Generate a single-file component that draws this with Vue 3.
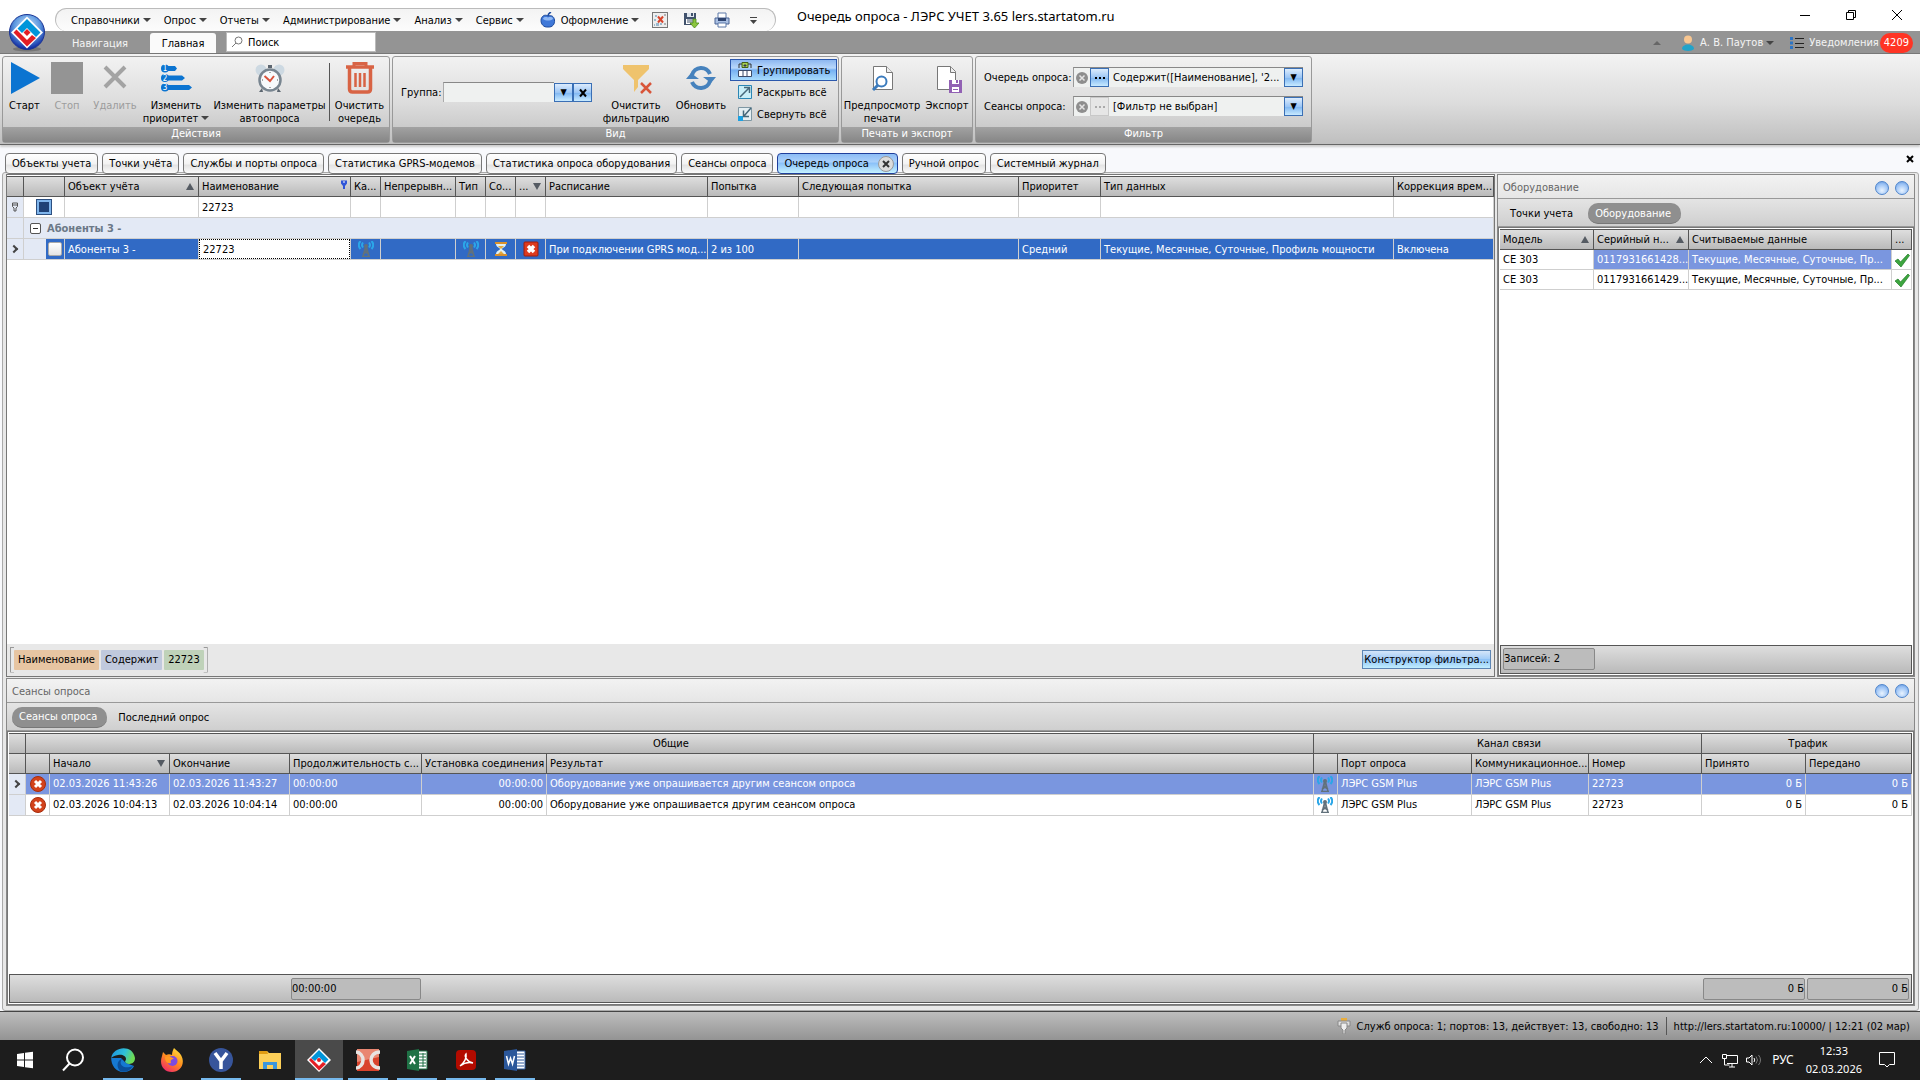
<template>
  <div class="window">
    <header class="titlebar">
      <nav class="quick-menu">
        <button v-for="item in menus" :key="item" class="menu-btn">
          <svg v-if="item === 'Оформление'" class="apple" viewBox="0 0 16 16">
            <path d="M8 4C5 2 1 4 1 8.500C1 12 3.500 15.500 8 15C12.500 15.500 15 12 14.500 8C14 4 11 3 8 4Z" fill="#3f78d8" stroke="#1d4a9c" />
            <path d="M3 7C3 5 6 4.500 8 5.500C10 4.500 13 5 13 7C10 9 6 9 3 7Z" fill="#8fb8f4" />
            <path d="M8 4C8 2 9 1 11 0" fill="none" stroke="#1d4a9c" stroke-width="1.500" />
          </svg>
          {{ item }}<i class="caret"></i>
        </button>
        <button class="tool-btn" aria-label="Закрыть все">
          <svg viewBox="0 0 16 16">
            <rect x=".5" y=".5" width="15" height="15" fill="#eee" stroke="#777" />
            <path d="M3 3h2v2H3zM2 7h2v2H2zM4 11h3v3H4zM8 11h2v2H8zM2 12h1v2H2z" fill="#9bb8cc" />
            <path d="M6 4.500l5 6M11 4.500l-5 6" stroke="#d8452c" stroke-width="2" />
            <path d="M12 3h2M12 12h2" stroke="#777" />
          </svg>
        </button>
        <button class="tool-btn" aria-label="Сохранить">
          <svg viewBox="0 0 16 16">
            <path d="M1 1h12v12H1z" fill="#41526d" />
            <path d="M4 1h7v4H4z" fill="#dfe6ee" /><path d="M8 1h2v3H8z" fill="#41526d" />
            <path d="M3 7h8v5H3z" fill="#fff" /><path d="M4 8h6M4 10h6" stroke="#41526d" />
            <path d="M10 7h3v4h3l-4.500 5L7 11h3z" fill="#8cc63f" stroke="#4c8a1a" stroke-width=".8" />
          </svg>
        </button>
        <button class="tool-btn" aria-label="Печать">
          <svg viewBox="0 0 16 16">
            <path d="M4 1h8v6H4z" fill="#fff" stroke="#5d78a8" />
            <path d="M1 6h14v6H1z" fill="#a9bfe2" stroke="#4a6496" />
            <path d="M4 6h8v3H4z" fill="#2e4470" />
            <path d="M4 11h8v4H4z" fill="#fff" stroke="#5d78a8" />
          </svg>
        </button>
        <button class="tool-btn" aria-label="Настройка панели">
          <svg viewBox="0 0 16 16"><path d="M5 5.500h7" stroke="#444" /><path d="M5 8h7l-3.500 4z" fill="#444" /></svg>
        </button>
      </nav>
      <h1 class="title">Очередь опроса - ЛЭРС УЧЕТ 3.65 lers.startatom.ru</h1>
      <div class="window-buttons">
        <button aria-label="Свернуть"><svg viewBox="0 0 12 12"><path d="M1 6.500h10" /></svg></button>
        <button aria-label="Восстановить"><svg viewBox="0 0 12 12"><path d="M1.500 3.500h7v7h-7zM3.500 3V1.500h7v7H9" /></svg></button>
        <button aria-label="Закрыть"><svg viewBox="0 0 12 12"><path d="M1 1l10 10M11 1L1 11" /></svg></button>
      </div>
    </header>

    <svg class="app-logo" viewBox="0 0 38 38">
      <defs>
        <radialGradient id="orb" cx="50%" cy="35%" r="62%">
          <stop offset="0" stop-color="#d3e8fb" /><stop offset=".6" stop-color="#5b97df" /><stop offset="1" stop-color="#1430a4" />
        </radialGradient>
      </defs>
      <ellipse cx="19" cy="35" rx="14" ry="2.500" fill="#555" opacity=".5" />
      <circle cx="19" cy="18" r="17.500" fill="url(#orb)" stroke="#1a3494" />
      <path d="M19 2.500L35 18.500L19 34.500L3 18.500Z" fill="#fff" />
      <path d="M19 5L32.500 18.500L28 23L19 14L14 19L9.500 14.500Z" fill="#0095da" />
      <path d="M5.500 18.500L8.500 15.500L19 26L24 21L28 24L19 32.500Z" fill="#e31e24" />
      <path d="M19 15l3.500 3.500L19 22l-3.500-3.500z" fill="#e31e24" />
    </svg>

    <div class="ribbon-tabs">
      <button class="ribbon-tab">Навигация</button>
      <button class="ribbon-tab active">Главная</button>
      <label class="search">
        <svg viewBox="0 0 12 12"><circle cx="7.500" cy="4.500" r="3.500" /><path d="M5 7L1 11" /></svg>
        <input type="text" value="Поиск" aria-label="Поиск">
      </label>
      <div class="account">
        <button aria-label="Свернуть ленту"><i class="caret up"></i></button>
        <button class="user">
          <svg viewBox="0 0 14 16"><circle cx="7" cy="4.500" r="4" fill="#f8c690" /><path d="M1 14C1 8 13 8 13 14C11 16.500 3 16.500 1 14Z" fill="#22a3c9" /></svg>
          А. В. Паутов<i class="caret"></i>
        </button>
        <button class="notes">
          <svg viewBox="0 0 14 12"><path d="M0 1.500h3M0 6h3M0 10.500h3" stroke="#2d74c4" stroke-width="3" /><path d="M5 1.500h9M5 6.500h9M5 10.500h9" stroke="#222" /></svg>
          Уведомления<b>4209</b>
        </button>
      </div>
    </div>

    <div class="ribbon">
      <section class="group">
        <div class="group-body">
          <button class="big w-start">
            <svg viewBox="0 0 32 32"><path d="M2 0L31 16L2 32Z" fill="#0b74d1" /></svg>Старт
          </button>
          <button class="big w-stop" disabled>
            <svg viewBox="0 0 32 32"><path d="M0 0h32v32H0z" fill="#949494" /></svg>Стоп
          </button>
          <button class="big w-del" disabled>
            <svg viewBox="0 0 32 32"><path d="M6 5L26 25M26 5L6 25" stroke="#a3a3a3" stroke-width="4" /></svg>Удалить
          </button>
          <button class="big w-prio">
            <svg viewBox="0 0 32 32">
              <path d="M5 4h10l2 2.500L15 9H5zM5 13.500h17l3 2.500-3 2.500H5zM5 23h24l3 2.500L29 28H5z" fill="#0b74d1" />
              <circle cx="5" cy="6.500" r="4" fill="#0b74d1" /><circle cx="5" cy="16" r="4" fill="#0b74d1" /><circle cx="5" cy="25.500" r="4" fill="#0b74d1" />
              <g fill="#fff" font-size="8" text-anchor="middle"><text x="5" y="9">1</text><text x="5" y="19">2</text><text x="5" y="28">3</text></g>
            </svg>
            <span>Изменить<br>приоритет<i class="caret"></i></span>
          </button>
          <button class="big w-params">
            <svg viewBox="0 0 32 32">
              <circle cx="7" cy="8" r="5.500" fill="#cdd9e2" /><circle cx="25" cy="8" r="5.500" fill="#cdd9e2" />
              <path d="M8 26l-3 4h4zM24 26l3 4h-4z" fill="#5c6670" /><path d="M14 3h4v3h-4z" fill="#5c6670" />
              <circle cx="16" cy="18" r="10.500" fill="#f7fafc" stroke="#788590" stroke-width="2.500" />
              <path d="M10.500 14L16 19l4-5" fill="none" stroke="#d9533c" stroke-width="2" />
              <path d="M16 10v1M16 25v1M8 18h1M23 18h1" stroke="#555" />
            </svg>
            <span>Изменить параметры<br>автоопроса</span>
          </button>
          <i class="separator"></i>
          <button class="big w-clear">
            <svg viewBox="0 0 32 32" fill="none" stroke="#d86344">
              <path d="M2 5h28" stroke-width="3.500" /><path d="M10 4V1.500h12V4" stroke-width="3" />
              <path d="M5.500 6v21q0 3 3 3h15q3 0 3-3V6" stroke-width="3.500" /><path d="M11.500 11v14M16 11v14M20.500 11v14" stroke-width="2.500" />
            </svg>
            <span>Очистить<br>очередь</span>
          </button>
        </div>
        <h2>Действия</h2>
      </section>

      <section class="group">
        <div class="group-body">
          <div class="group-field">
            <label for="group">Группа:</label>
            <input id="group" type="text">
            <button class="blue-btn" aria-label="Выбрать">▼</button>
            <button class="blue-btn" aria-label="Очистить">
              <svg viewBox="0 0 10 10"><path d="M2 1.500l6 7M8 1.500l-6 7" stroke="#000" stroke-width="2" /></svg>
            </button>
          </div>
          <button class="big w-filter">
            <svg viewBox="0 0 32 32">
              <path d="M3 3h26v4L18 18v7l-4 5V18L3 7z" fill="#efc36d" />
              <path d="M21 21l10 10M31 21L21 31" stroke="#d8553a" stroke-width="2.500" />
            </svg>
            <span>Очистить<br>фильтрацию</span>
          </button>
          <button class="big w-refresh">
            <svg viewBox="0 0 32 32">
              <path d="M7 13A9.500 9.500 0 0 1 25 12M25 19A9.500 9.500 0 0 1 7 20" fill="none" stroke="#4682bd" stroke-width="4" />
              <path d="M18 15h13l-5 6zM1 17h13L6 11z" fill="#4682bd" />
            </svg>
            Обновить
          </button>
          <div class="stack">
            <button class="small pressed">
              <svg viewBox="0 0 14 16"><path d="M1 4V2h3M10 2h3v2M1 4v2M13 4v2" stroke="#333" fill="none" /><path d="M4 .5h6v5H4z" fill="#a6cf52" stroke="#446017" /><path d="M7 2v3M5.500 3.500h3" stroke="#335" /><path d="M.5 8.500h13v6H.5zM5 8.500v6M9 8.500v6" fill="#fff" stroke="#3b4b68" /></svg>
              Группировать
            </button>
            <button class="small">
              <svg viewBox="0 0 14 16"><path d="M.5 1.500h13v13H.5z" fill="#c9eef8" stroke="#2b86b4" /><path d="M2 13L11 4M6 3.500h5.500V9" fill="none" stroke="#466779" stroke-width="1.500" /></svg>
              Раскрыть всё
            </button>
            <button class="small">
              <svg viewBox="0 0 14 16"><path d="M.5 1.500h13v13H.5z" fill="#e4eef2" stroke="#7f97a3" /><path d="M0 10h5v5H0z" fill="#1ba1e2" /><path d="M13 2L6 10M5.500 4.500V10.500H11" fill="none" stroke="#466779" stroke-width="1.500" /></svg>
              Свернуть всё
            </button>
          </div>
        </div>
        <h2>Вид</h2>
      </section>

      <section class="group">
        <div class="group-body">
          <button class="big w-preview">
            <svg viewBox="0 0 32 32">
              <path d="M7.500 4.500h13l6 6v17h-19z" fill="#fff" stroke="#777" /><path d="M20.500 4.500v6h6" fill="#eee" stroke="#777" />
              <circle cx="15.500" cy="19.500" r="5" fill="#fff" stroke="#3b7bbd" stroke-width="2" /><path d="M12 23l-5 5" stroke="#3b7bbd" stroke-width="3" />
            </svg>
            <span>Предпросмотр<br>печати</span>
          </button>
          <button class="big w-export">
            <svg viewBox="0 0 32 32">
              <path d="M6.500 4.500h13l5 5v18h-18z" fill="#fff" stroke="#777" /><path d="M19.500 4.500v6h5" fill="#eee" stroke="#777" />
              <path d="M18 18h13v13H18z" fill="#9261b4" /><path d="M21 18h7v4h-7zM21 25h7v5h-7z" fill="#fff" /><path d="M25 18h2v3h-2zM22 27h5v1h-5z" fill="#9261b4" />
            </svg>
            Экспорт
          </button>
        </div>
        <h2>Печать и экспорт</h2>
      </section>

      <section class="group">
        <div class="filters">
          <div v-for="f in filters" :key="f.id" class="filter-row">
            <label :for="f.id">{{ f.label }}</label>
            <div class="combo">
              <button class="round-x" aria-label="Сбросить">
                <svg viewBox="0 0 12 12"><circle cx="6" cy="6" r="6" fill="#8e8e8e" /><path d="M3.500 3.500l5 5M8.500 3.500l-5 5" stroke="#e4e4e4" stroke-width="1.500" /></svg>
              </button>
              <button class="blue-btn" :disabled="!f.active" aria-label="Изменить">
                <svg viewBox="0 0 10 10"><path d="M0 4h2v2H0zM4 4h2v2H4zM8 4h2v2H8z" fill="currentColor" /></svg>
              </button>
              <select :id="f.id"><option>{{ f.value }}</option></select>
              <span class="drop blue-btn">▼</span>
            </div>
          </div>
        </div>
        <h2>Фильтр</h2>
      </section>
    </div>

    <nav class="doc-tabs">
      <button v-for="t in docTabs" :key="t" :class="['doc-tab', { active: t === currentTab }]" @click="currentTab = t">
        {{ t }}
        <svg v-if="t === currentTab" viewBox="0 0 16 16"><circle cx="8" cy="8" r="7.500" fill="#dcdcdc" stroke="#999" /><path d="M5 5l6 6M11 5l-6 6" stroke="#333" stroke-width="2" /></svg>
      </button>
      <button class="close-doc" aria-label="Закрыть вкладку"><svg viewBox="0 0 8 8"><path d="M1 1l6 6M7 1L1 7" stroke="#000" stroke-width="2" /></svg></button>
    </nav>

    <main class="workspace">
      <div class="upper">
        <section class="queue">
          <table class="grid queue-grid">
            <colgroup>
              <col class="c17"><col class="c22"><col class="c19"><col class="c134"><col class="c152"><col class="c30"><col class="c75"><col class="c30"><col class="c30"><col class="c30">
              <col class="c162"><col class="c91"><col class="c220"><col class="c82"><col><col class="c100">
            </colgroup>
            <thead>
              <tr>
                <th></th><th colspan="2"></th>
                <th v-for="c in queueCols" :key="c.name"><div class="th">{{ c.name }}<i v-if="c.sort" :class="['sort', c.sort]"></i>
                  <svg v-if="c.pin" class="pin" viewBox="0 0 8 10"><path d="M1 .5h6v3L5 6v3H3V6L1 3.500z" fill="#2f55d8" /><path d="M3 2h2" stroke="#fff" /></svg>
                </div></th>
              </tr>
            </thead>
            <tbody>
              <tr class="filter-line">
                <td class="mark"><svg class="i8" viewBox="0 0 8 10"><path d="M1.500 1h5v3.500L5 6v3H3V6L1.500 4.500zM1.500 3h5" fill="none" stroke="#555" /></svg></td>
                <td colspan="2" class="center"><button class="tri-check" aria-label="Выбрать все"></button></td>
                <td></td>
                <td class="edit"><input type="text" value="22723" aria-label="Фильтр по наименованию"></td>
                <td v-for="n in 11" :key="n"></td>
              </tr>
              <tr class="group-line">
                <td class="mark"></td>
                <td colspan="15"><button class="minus" aria-label="Свернуть группу"></button>Абоненты 3 -</td>
              </tr>
              <tr class="focused">
                <td class="mark"><i class="arrow"></i></td>
                <td class="indent"></td>
                <td class="center"><input type="checkbox" class="check" aria-label="Выбрать строку"></td>
                <td>Абоненты 3 -</td>
                <td class="edit cell-focus"><input type="text" value="22723" aria-label="Наименование"></td>
                <td class="center"><svg class="i16" viewBox="0 0 16 16"><use href="#antenna" /></svg></td>
                <td></td>
                <td class="center"><svg class="i16" viewBox="0 0 16 16"><use href="#antenna" /></svg></td>
                <td class="center">
                  <svg class="i16" viewBox="0 0 16 16"><path d="M2 1h12v2H2zM2 13h12v2H2z" fill="#d9902c" /><path d="M3 3h10c0 3-4 4-4 5s4 2 4 5H3c0-3 4-4 4-5S3 6 3 3z" fill="#dff0f6" /><path d="M5 5h6L8 8zM5 13l3-3 3 3z" fill="#e2a83f" /></svg>
                </td>
                <td class="center">
                  <svg class="i16" viewBox="0 0 16 16"><rect x="1" y="1" width="14" height="14" rx="1" fill="#dd3a1e" stroke="#a01c0c" /><path d="M5 5l6 6M11 5l-6 6" stroke="#fff" stroke-width="3.500" /></svg>
                </td>
                <td>При подключении GPRS мод...</td><td>2 из 100</td><td></td><td>Средний</td>
                <td>Текущие, Месячные, Суточные, Профиль мощности</td><td>Включена</td>
              </tr>
            </tbody>
          </table>
          <div class="filter-panel">
            <div class="criteria"><span class="field">Наименование</span><span class="op">Содержит</span><span class="val">22723</span></div>
            <button class="designer">Конструктор фильтра...</button>
          </div>
        </section>

        <section class="panel equipment">
          <div class="panel-head"><h3>Оборудование</h3><button class="orb" aria-label="Закрепить"></button><button class="orb" aria-label="Закрыть"></button></div>
          <div class="panel-tabs"><button>Точки учета</button><button class="active">Оборудование</button></div>
          <div class="panel-grid">
            <table class="grid">
              <colgroup><col class="c94"><col class="c95"><col><col class="c20"></colgroup>
              <thead>
                <tr>
                  <th><div class="th">Модель<i class="sort asc"></i></div></th>
                  <th><div class="th">Серийный н...<i class="sort asc"></i></div></th>
                  <th>Считываемые данные</th><th>...</th>
                </tr>
              </thead>
              <tbody>
                <tr v-for="(e, i) in equipment" :key="e" :class="{ picked: i === 0 }">
                  <td class="plain">CE 303</td><td>{{ e }}</td><td>Текущие, Месячные, Суточные, Пр...</td>
                  <td class="plain center"><svg class="i16" viewBox="0 0 16 16"><path d="M1 9l3-2 2.500 3L14 2l1.500 1.500L7 15z" fill="#3da63f" stroke="#237b2a" stroke-width=".7" /></svg></td>
                </tr>
              </tbody>
            </table>
            <div class="summary"><span class="sum-count">Записей: 2</span></div>
          </div>
        </section>
      </div>

      <section class="panel sessions">
        <div class="panel-head"><h3>Сеансы опроса</h3><button class="orb" aria-label="Закрепить"></button><button class="orb" aria-label="Закрыть"></button></div>
        <div class="panel-tabs"><button class="active">Сеансы опроса</button><button>Последний опрос</button></div>
        <div class="panel-grid">
          <table class="grid">
            <colgroup>
              <col class="c17"><col class="c24"><col class="c120"><col class="c120"><col class="c132"><col class="c125"><col>
              <col class="c24"><col class="c134"><col class="c117"><col class="c113"><col class="c104"><col class="c106">
            </colgroup>
            <thead>
              <tr class="bands"><th></th><th colspan="6">Общие</th><th colspan="4">Канал связи</th><th colspan="2">Трафик</th></tr>
              <tr>
                <th></th><th></th><th><div class="th">Начало<i class="sort desc"></i></div></th>
                <th>Окончание</th><th>Продолжительность с...</th><th>Установка соединения</th><th>Результат</th>
                <th></th><th>Порт опроса</th><th>Коммуникационное...</th><th>Номер</th><th>Принято</th><th>Передано</th>
              </tr>
            </thead>
            <tbody>
              <tr v-for="(s, i) in sessions" :key="s.from" :class="{ picked: i === 0 }">
                <td class="mark"><i v-if="i === 0" class="arrow"></i></td>
                <td class="center"><svg class="i16" viewBox="0 0 16 16"><circle cx="8" cy="8" r="7.500" fill="#d2421b" stroke="#a62c0c" /><path d="M5 5l6 6M11 5l-6 6" stroke="#fff" stroke-width="3" /></svg></td>
                <td>{{ s.from }}</td><td>{{ s.to }}</td><td>00:00:00</td><td class="right">00:00:00</td>
                <td>Оборудование уже опрашивается другим сеансом опроса</td>
                <td class="center"><svg class="i16" viewBox="0 0 16 16"><use href="#antenna" /></svg></td>
                <td>ЛЭРС GSM Plus</td><td>ЛЭРС GSM Plus</td><td>22723</td><td class="right">0 Б</td><td class="right">0 Б</td>
              </tr>
            </tbody>
          </table>
          <div class="summary totals"><span class="sum-time">00:00:00</span><span class="sum-in">0 Б</span><span class="sum-out">0 Б</span></div>
        </div>
      </section>
    </main>

    <footer class="statusbar">
      <svg class="i16" viewBox="0 0 16 16"><path d="M5 0h6v3H5z" fill="#e9ad3c" /><path d="M2 3h12v5H2z" fill="#ddd" stroke="#888" /><path d="M5 5h6v5l-2 2v4H7v-4l-2-2z" fill="#eee" stroke="#888" /></svg>
      <span>Служб опроса: 1; портов: 13, действует: 13, свободно: 13</span>
      <i></i>
      <span>http://lers.startatom.ru:10000/ | 12:21 (02 мар)</span>
    </footer>

    <footer class="taskbar">
      <button v-for="a in apps" :key="a.id" :class="['task', { running: a.running, current: a.id === 'lers' }]" :aria-label="a.id">
        <svg v-if="a.id === 'start'" viewBox="0 0 24 24"><path d="M4 6l7-1v6.500H4zM12 4.800l8-1V11.500h-8zM4 12.500h7V19l-7-1zM12 12.500h8v7.700l-8-1z" fill="#fff" /></svg>
        <svg v-else-if="a.id === 'search'" viewBox="0 0 24 24"><circle cx="13" cy="9.500" r="8" fill="none" stroke="#fff" stroke-width="2" /><path d="M7.500 15.500L1 22.500" stroke="#fff" stroke-width="2" /></svg>
        <svg v-else-if="a.id === 'edge'" viewBox="0 0 24 24">
          <defs><linearGradient id="edge" x2="1" y2=".3"><stop offset="0" stop-color="#1b8fe0" /><stop offset=".6" stop-color="#2fc1d8" /><stop offset="1" stop-color="#6ddc55" /></linearGradient></defs>
          <path d="M.2 10C0 17 5 24 12 24c5 0 9-2 11-6l-8-3-5-5z" fill="#1679d2" />
          <path d="M.2 10C2-2 22-4 24 10c0 6-6 7-9 5-2-2 0-2 0-4 0-3-4-5-8-4C4 7.500 1 9 .2 10z" fill="url(#edge)" />
          <path d="M11 11c-4 5 1 11 11 7-3 5-8 7-13 5-4-4-3-11 2-12z" fill="#0b4f9a" />
        </svg>
        <svg v-else-if="a.id === 'firefox'" viewBox="0 0 24 24">
          <defs><linearGradient id="fox" x1=".8" x2=".2" y2="1"><stop offset="0" stop-color="#ffe03a" /><stop offset=".5" stop-color="#ff8a1e" /><stop offset="1" stop-color="#f0246e" /></linearGradient></defs>
          <path d="M14 0c3 3 5 4 7 7 5 9-1 17-9 17C3 24-1 16 2 8l1-4 3 3c2-1 4-1 6 0 0-3 1-5 2-7z" fill="url(#fox)" /><circle cx="12.500" cy="13" r="5" fill="#7b4be0" /><path d="M5 9c4-1 7 0 9 2-3 0-4 2-3 4-4 1-6-2-6-6z" fill="#ff9a22" />
        </svg>
        <svg v-else-if="a.id === 'yandex'" viewBox="0 0 24 24"><circle cx="12" cy="12" r="12" fill="#37559b" /><path d="M6 5l6 8 6-8M12 12v9" fill="none" stroke="#fff" stroke-width="3.500" /></svg>
        <svg v-else-if="a.id === 'explorer'" viewBox="0 0 24 24"><path d="M1 3h8l2 2h12v16H1z" fill="#fccf58" /><path d="M1 3h8l1 3H1z" fill="#e09c13" /><path d="M5 21v-7h14v7h-4v-4H9v4z" fill="#3c96dc" /></svg>
        <svg v-else-if="a.id === 'lers'" viewBox="0 0 24 24"><path d="M12 0l12 12-12 12L0 12z" fill="#fff" /><path d="M12 2l9.500 9.500-3.500 3.500-6-6-4 4-4-3z" fill="#0095da" /><path d="M2 12l2-2 8 8 4-4 3 2-7 6.500z" fill="#e31e24" /><circle cx="12" cy="12" r="2" fill="#e31e24" /></svg>
        <svg v-else-if="a.id === 'dc'" viewBox="0 0 24 24"><path d="M1 1h22v22H1z" fill="#d9432c" /><path d="M1 1h22v8L1 14z" fill="#e98772" /><path d="M0 4c4 0 7 4 7 8s-3 8-7 8M24 4c-6 0-9 4-9 8s3 8 9 8" fill="none" stroke="#e8e4e2" stroke-width="3.500" /></svg>
        <svg v-else-if="a.id === 'excel'" viewBox="0 0 24 24"><path d="M12 3h10v18H12z" fill="#fff" stroke="#1f7246" /><path d="M14 6h7M14 9h7M14 12h7M14 15h7M14 18h7M18 5v14" stroke="#1f7246" /><path d="M2 3l12-2v22L2 21z" fill="#1f7246" /><path d="M5 8l5 8M10 8l-5 8" stroke="#fff" stroke-width="2" /></svg>
        <svg v-else-if="a.id === 'acrobat'" viewBox="0 0 24 24"><rect x="2" y="2" width="20" height="20" rx="4" fill="#b30b00" /><path d="M6 18c4-3 7-8 6-12-2 2 1 8 7 9-4-1-9 0-13 3z" fill="none" stroke="#fff" stroke-width="1.500" /></svg>
        <svg v-else viewBox="0 0 24 24"><path d="M12 3h10v18H12z" fill="#fff" stroke="#2b579a" /><path d="M14 6h7M14 9h7M14 12h7M14 15h7M14 18h7" stroke="#2b579a" /><path d="M1 3l13-2v22L1 21z" fill="#2b579a" /><path d="M3.500 8l2 8 2-6 2 6 2-8" fill="none" stroke="#fff" stroke-width="1.500" /></svg>
      </button>
      <div class="tray">
        <svg viewBox="0 0 16 16"><path d="M2 11l6-6 6 6" /></svg>
        <svg viewBox="0 0 16 16"><path d="M5 3.500h10.500v8H5M10 12v3M7 15h6M.5 2.500h4v4h-4zM2.500 7v6h5" /></svg>
        <svg viewBox="0 0 16 16"><path d="M.5 6v4H3l3 3V3L3 6zM8 6q1.500 2 0 4" /><path d="M10 4.500q3 3.500 0 7M12.500 3q4 5 0 10" stroke="#777" /></svg>
        <span class="lang">РУС</span>
        <time>12:33<br>02.03.2026</time>
        <svg class="action" viewBox="0 0 18 18"><path d="M1.500 1.500h15v12h-5L9 16l-2.500-2.500h-5z" /></svg>
      </div>
    </footer>

    <svg class="defs" aria-hidden="true">
      <symbol id="antenna" viewBox="0 0 16 16">
        <path d="M2.500 0q-3.500 4 0 8M13.500 0q3.500 4 0 8M5 1.500q-2 2.500 0 5M11 1.500q2 2.500 0 5" fill="none" stroke="#2ba6e8" stroke-width="2" />
        <path d="M8 4L5 15.500M8 4l3 11.500M6.500 9h3M5 13l5-3M6 10l5 3M4 15.500h8" fill="none" stroke="#62717b" stroke-width="1.500" />
        <circle cx="8" cy="5" r="2" fill="#62717b" />
      </symbol>
    </svg>
  </div>
</template>

<script setup>
import { ref } from 'vue'

const menus = ['Справочники', 'Опрос', 'Отчеты', 'Администрирование', 'Анализ', 'Сервис', 'Оформление']

const filters = [
  { id: 'queue-filter', label: 'Очередь опроса:', value: "Содержит([Наименование], '2...", active: true },
  { id: 'session-filter', label: 'Сеансы опроса:', value: '[Фильтр не выбран]', active: false }
]

const currentTab = ref('Очередь опроса')
const docTabs = [
  'Объекты учета',
  'Точки учёта',
  'Службы и порты опроса',
  'Статистика GPRS-модемов',
  'Статистика опроса оборудования',
  'Сеансы опроса',
  'Очередь опроса',
  'Ручной опрос',
  'Системный журнал'
]

const queueCols = [
  { name: 'Объект учёта', sort: 'asc' },
  { name: 'Наименование', pin: true },
  { name: 'Ка...' },
  { name: 'Непрерывн...' },
  { name: 'Тип' },
  { name: 'Со...' },
  { name: '...', sort: 'desc' },
  { name: 'Расписание' },
  { name: 'Попытка' },
  { name: 'Следующая попытка' },
  { name: 'Приоритет' },
  { name: 'Тип данных' },
  { name: 'Коррекция врем...' }
]

const equipment = ['0117931661428...', '0117931661429...']

const sessions = [
  { from: '02.03.2026 11:43:26', to: '02.03.2026 11:43:27' },
  { from: '02.03.2026 10:04:13', to: '02.03.2026 10:04:14' }
]

const apps = [
  { id: 'start' },
  { id: 'search' },
  { id: 'edge', running: true },
  { id: 'firefox' },
  { id: 'yandex', running: true },
  { id: 'explorer' },
  { id: 'lers', running: true },
  { id: 'dc', running: true },
  { id: 'excel', running: true },
  { id: 'acrobat', running: true },
  { id: 'word', running: true }
]
</script>

<style>
body {
  margin: 0;
}
</style>

<style scoped>
.window {
  position: relative;
  display: flex;
  flex-direction: column;
  min-height: 100vh;
  background: #f8f9fc;
  font: 11px/13px Tahoma, "DejaVu Sans Condensed", "Noto Sans", sans-serif;
  color: #000;
}

.window *,
.window *::before {
  box-sizing: border-box;
}

button,
input,
select {
  margin: 0;
  padding: 0;
  border: none;
  border-radius: 0;
  background: none;
  font: inherit;
  color: inherit;
}

h1,
h2,
h3 {
  margin: 0;
  font: inherit;
}

svg {
  flex: none;
}

.defs {
  position: absolute;
  width: 0;
  height: 0;
}

.caret {
  display: inline-block;
  margin-left: 3px;
  vertical-align: 2px;
  border: 4px solid transparent;
  border-top-color: #444;
  border-bottom: none;
}

.caret.up {
  border-top: none;
  border-bottom: 4px solid #666;
}

/* title bar */
.titlebar {
  display: flex;
  align-items: flex-start;
  height: 31px;
  padding-left: 55px;
  background: #fff;
}

.quick-menu {
  display: flex;
  align-items: center;
  width: 721px;
  height: 23px;
  margin-top: 8px;
  padding-left: 15px;
  border: 1px solid #bbb;
  border-bottom: none;
  border-radius: 12px;
  background: linear-gradient(#f3f3f3, #fcfcfc);
}

.menu-btn {
  display: flex;
  align-items: center;
  margin-right: 13px;
  white-space: nowrap;
}

.menu-btn:last-of-type {
  margin-right: 16px;
}

.apple {
  width: 16px;
  height: 16px;
  margin: 0 5px 0 3px;
}

.tool-btn {
  display: flex;
  margin-right: 15px;
}

.tool-btn svg {
  width: 16px;
  height: 16px;
}

.title {
  margin: 6px 0 0 21px;
  font: 13px/20px "Noto Sans", sans-serif;
}

.window-buttons {
  display: flex;
  margin-left: auto;
}

.window-buttons button {
  display: flex;
  align-items: center;
  justify-content: center;
  width: 46px;
  height: 29px;
}

.window-buttons svg {
  width: 12px;
  height: 12px;
  fill: none;
  stroke: #000;
}

.app-logo {
  position: absolute;
  left: 8px;
  top: 14px;
  width: 38px;
  height: 38px;
}

/* ribbon */
.ribbon-tabs {
  display: flex;
  height: 23px;
  padding-left: 50px;
  border-bottom: 1px solid #777;
  background: #949494;
  color: #f4f4f4;
}

.ribbon-tab {
  width: 100px;
  padding-top: 2px;
}

.ribbon-tab.active {
  width: 66px;
  margin-top: 2px;
  padding-top: 0;
  border-radius: 3px 3px 0 0;
  background: #fafafa;
  color: #000;
}

.search {
  display: flex;
  align-items: center;
  width: 150px;
  height: 20px;
  margin: 1px 0 0 10px;
  padding-left: 4px;
  border: 1px solid #bbb;
  background: #fff;
  color: #000;
}

.search svg {
  width: 12px;
  height: 12px;
  margin-right: 5px;
  fill: none;
  stroke: #777;
}

.search input {
  width: 100px;
}

.account,
.account button {
  display: flex;
  align-items: center;
}

.account {
  gap: 20px;
  margin-left: auto;
  padding: 1px 7px 0 0;
}

.account svg {
  width: 14px;
  height: 16px;
  margin-right: 5px;
}

.account .notes {
  margin-left: -4px;
}

.account b {
  margin-left: 1px;
  padding: 3px 4px;
  border-radius: 10px;
  background: #ff3424;
  color: #fff;
  font-weight: normal;
  line-height: 14px;
}

.ribbon {
  display: flex;
  gap: 2px;
  height: 91px;
  padding: 2px 2px 0;
  border-bottom: 1px solid #666;
  background: linear-gradient(#f3f3f3, #dcdcdc 55%, #bfbfbf);
  box-shadow: 0 2px 2px #ccc;
}

.group {
  display: flex;
  flex-direction: column;
  height: 87px;
  border: 1px solid #999;
  border-radius: 3px;
}

.group h2 {
  height: 15px;
  background: linear-gradient(#a2a2a2, #868686);
  color: #fff;
  text-align: center;
}

.group-body {
  display: flex;
  flex: 1;
}

.big {
  display: flex;
  flex-direction: column;
  align-items: center;
  padding-top: 5px;
  white-space: nowrap;
}

.big svg {
  width: 32px;
  height: 32px;
  margin-bottom: 5px;
}

.big:disabled {
  color: #9c9c9c;
}

.w-start { width: 43px; }
.w-stop { width: 42px; }
.w-del { width: 54px; }
.w-prio { width: 68px; }
.w-params { width: 119px; }
.w-clear { width: 59px; }
.w-filter { width: 72px; }
.w-refresh { width: 58px; }
.w-preview { width: 80px; }
.w-export { width: 50px; }

.separator {
  width: 1px;
  height: 58px;
  margin-top: 6px;
  background: #555;
}

.group-field {
  display: flex;
  align-items: center;
  width: 207px;
  padding: 0 8px;
}

.group-field label {
  flex: 1;
}

.group-field input {
  width: 111px;
  height: 20px;
  border-top: 1px solid #888;
  border-left: 1px solid #aaa;
  background: #eff1f0;
}

.blue-btn {
  width: 19px;
  height: 19px;
  border: 1px solid #3a6fb5;
  background: linear-gradient(#dcecfd, #9cc6f5 50%, #7db5f1 51%, #c8eaff);
  font-size: 9px;
  line-height: 16px;
  text-align: center;
}

.blue-btn:disabled {
  border-color: #c8c8c8;
  background: #e6e6e6;
  color: #aaa;
}

.blue-btn svg {
  width: 10px;
  height: 10px;
  vertical-align: middle;
}

.stack {
  display: flex;
  flex-direction: column;
  width: 108px;
  padding: 2px 1px 2px 0;
}

.small {
  display: flex;
  align-items: center;
  gap: 5px;
  height: 22px;
  padding-left: 7px;
  border: 1px solid transparent;
  white-space: nowrap;
}

.small svg {
  width: 14px;
  height: 16px;
}

.small.pressed {
  border: 1px solid #2c58ac;
  background: linear-gradient(#8db7f0, #b9d8fb 40%, #76b0f2 50%, #a8dcfd);
}

.filters {
  display: flex;
  flex: 1;
  flex-direction: column;
  gap: 9px;
  width: 335px;
  padding: 10px 8px 0;
}

.filter-row {
  display: flex;
  align-items: center;
  justify-content: space-between;
}

.combo {
  position: relative;
  display: flex;
  align-items: center;
  width: 230px;
  height: 20px;
  border-top: 1px solid #888;
  border-left: 1px solid #999;
  background: #eff1f0;
}

.round-x {
  display: flex;
  margin: 0 2px;
}

.round-x svg {
  width: 12px;
  height: 12px;
}

.combo select {
  flex: 1;
  height: 19px;
  padding-left: 4px;
  appearance: none;
}

.drop {
  position: absolute;
  right: 0;
  top: 0;
  pointer-events: none;
}

/* document tabs */
.doc-tabs {
  position: relative;
  display: flex;
  gap: 4px;
  height: 29px;
  margin-bottom: -2px;
  padding: 8px 9px 0 5px;
}

.doc-tab {
  display: flex;
  align-items: center;
  gap: 9px;
  height: 21px;
  padding: 0 6px;
  border: 1px solid #777;
  border-radius: 4px;
  background: linear-gradient(#fff, #f3f3f3 50%, #e4e4e4 60%, #fafafa);
  white-space: nowrap;
}

.doc-tab.active {
  padding-right: 3px;
  border-color: #1f3f9c;
  background: linear-gradient(#8cbcf5, #a9d0fb 40%, #8cc2f9 50%, #c5f2ff);
}

.doc-tab svg {
  width: 16px;
  height: 16px;
}

.close-doc {
  display: flex;
  margin: 2px -3px 0 auto;
}

.close-doc svg {
  width: 8px;
  height: 8px;
}

/* workspace */
.workspace {
  display: flex;
  flex: 1;
  flex-direction: column;
  gap: 1px;
  margin: 0 1px 0 2px;
  padding: 1px 3px 4px;
  border: 1px solid #aaa;
  border-radius: 3px;
  background: #e8e8e8;
}

.upper {
  display: flex;
  flex: 502 1 0;
  gap: 2px;
}

.queue {
  display: flex;
  flex: 1;
  flex-direction: column;
  min-width: 0;
  padding-top: 1px;
  border: 1px solid #777;
  background: #fff;
}

.grid {
  width: 100%;
  table-layout: fixed;
  border-spacing: 0;
  border-top: 1px solid #555;
}

.c17 { width: 17px; }
.c19 { width: 19px; }
.c20 { width: 20px; }
.c22 { width: 22px; }
.c24 { width: 24px; }
.c30 { width: 30px; }
.c75 { width: 75px; }
.c82 { width: 82px; }
.c91 { width: 91px; }
.c94 { width: 94px; }
.c95 { width: 95px; }
.c100 { width: 100px; }
.c104 { width: 104px; }
.c106 { width: 106px; }
.c113 { width: 113px; }
.c117 { width: 117px; }
.c120 { width: 120px; }
.c125 { width: 125px; }
.c132 { width: 132px; }
.c134 { width: 134px; }
.c152 { width: 152px; }
.c162 { width: 162px; }
.c220 { width: 220px; }

.grid th {
  height: 20px;
  padding: 0 0 0 3px;
  border-right: 1px solid #555;
  border-bottom: 1px solid #555;
  background: linear-gradient(#dedede, #bababa);
  font-weight: normal;
  text-align: left;
  white-space: nowrap;
  overflow: hidden;
}

.grid td {
  height: 21px;
  padding: 0 3px;
  border-right: 1px solid #cfcfcf;
  border-bottom: 1px solid #cfcfcf;
  background: #fff;
  white-space: nowrap;
  overflow: hidden;
}

.equipment .grid td {
  height: 20px;
}

.th {
  display: flex;
  align-items: center;
  justify-content: space-between;
}

.sort {
  margin-right: 4px;
  border: 4px solid transparent;
}

.sort.asc {
  border-top: none;
  border-bottom: 7px solid #555b63;
}

.sort.desc {
  border-bottom: none;
  border-top: 7px solid #555b63;
}

.pin {
  width: 8px;
  height: 10px;
  margin: 0 2px 4px 0;
}

.i8 {
  display: block;
  width: 8px;
  height: 10px;
  margin-left: 1px;
}

.i16 {
  display: inline-block;
  width: 16px;
  height: 16px;
  vertical-align: middle;
}

.grid .center {
  padding: 0;
  line-height: 0;
  text-align: center;
}

.grid .right {
  text-align: right;
}

.grid .bands th {
  text-align: center;
}

.grid .mark,
.grid .indent,
.grid .group-line td {
  background: #e3e9f5;
}

.grid .indent {
  border-right: none;
}

.grid .group-line td {
  color: #6b7887;
  font-weight: bold;
}

.arrow {
  display: block;
  width: 6px;
  height: 6px;
  margin-left: 1px;
  border: solid #444;
  border-width: 2px 2px 0 0;
  transform: rotate(45deg);
}

.tri-check {
  width: 14px;
  height: 14px;
  border: 2px solid #7fb5ec;
  outline: 1px solid #2c4f80;
  background: #1f4176;
  vertical-align: middle;
}

.minus {
  width: 11px;
  height: 11px;
  margin: 0 6px 0 3px;
  border: 1px solid #555;
  border-radius: 2px;
  background: linear-gradient(#333, #333) center / 5px 1px no-repeat #fff;
  vertical-align: -1px;
}

.check {
  width: 14px;
  height: 14px;
  border: 1px solid #aaa;
  border-radius: 2px;
  background: linear-gradient(#fff, #e4e4e4);
  appearance: none;
  vertical-align: middle;
}

.edit input {
  display: block;
  width: 100%;
}

.grid .focused td:not(.mark):not(.indent):not(.cell-focus) {
  background: #316ac5;
  color: #fff;
}

.grid .cell-focus {
  padding: 0;
}

.cell-focus input {
  height: 20px;
  padding-left: 3px;
  border: 1px dotted #000;
}

.grid .picked td:not(.mark):not(.plain) {
  background: #7a96df;
  color: #fff;
}

.filter-panel {
  display: flex;
  align-items: center;
  justify-content: space-between;
  height: 32px;
  margin-top: auto;
  padding: 0 3px;
  background: #e8e8e8;
}

.criteria {
  position: relative;
  display: flex;
  gap: 2px;
  padding: 3px 4px;
}

.criteria::before {
  content: "";
  position: absolute;
  inset: 0;
  border: 1px solid #999;
  clip-path: polygon(0 0, 4px 0, 4px 100%, 0 100%, 0 0, 100% 0, 100% 100%, calc(100% - 4px) 100%, calc(100% - 4px) 0, 0 0);
}

.criteria span {
  padding: 4px;
  border-radius: 1px;
  line-height: 12px;
}

.field { background: #e7c5a2; }
.op { background: #c0c9dd; }
.val { background: #bfd2b9; }

.designer {
  height: 19px;
  padding: 0 1px;
  border: 1px solid #5d86b5;
  background: linear-gradient(#d4e5f9, #a4cdf7 45%, #8ec2f6 50%, #c1eeff);
}

/* side and bottom panels */
.panel {
  display: flex;
  flex-direction: column;
  border: 1px solid #888;
}

.equipment {
  width: 418px;
}

.sessions {
  flex: 326 1 0;
}

.panel-head,
.panel-tabs {
  display: flex;
  align-items: center;
  border-bottom: 1px solid #999;
}

.panel-head {
  gap: 6px;
  height: 24px;
  padding: 2px 5px 0;
  background: linear-gradient(#f2f2f2, #e6e6e6);
  color: #666;
}

.panel-head h3 {
  flex: 1;
}

.orb {
  width: 14px;
  height: 14px;
  border: 1px solid #4f85cc;
  border-radius: 50%;
  background: radial-gradient(circle at 50% 70%, #e8f3ff, #9cc3f5 60%, #5c93dc);
}

.panel-tabs {
  height: 28px;
  padding: 2px 0 0 5px;
  background: linear-gradient(#e4e4e4, #cfcfcf);
}

.panel-tabs button {
  height: 21px;
  margin-right: 4px;
  padding: 0 7px;
  border-radius: 10px;
}

.panel-tabs button:first-child:not(.active) {
  margin-right: 8px;
}

.panel-tabs .active {
  padding: 0 10px 0 7px;
  border-bottom: 1px solid #777;
  background: #8f8f8f;
  color: #fff;
}

.panel-grid {
  display: flex;
  flex: 1;
  flex-direction: column;
  padding: 1px;
  border: 1px solid #777;
  background: #fff;
}

.summary {
  display: flex;
  align-items: center;
  height: 29px;
  margin-top: auto;
  padding: 0 2px;
  border: 1px solid #555;
  background: linear-gradient(#dedede, #bababa);
}

.summary span {
  height: 22px;
  border: 1px solid #888;
  border-radius: 2px;
  background: #bcbcbc;
  line-height: 20px;
}

.sum-count { width: 92px; }
.sum-time { width: 130px; margin: 0 auto 0 279px; }
.sum-in { width: 102px; margin-right: 2px; text-align: right; }
.sum-out { width: 102px; text-align: right; }

.statusbar {
  display: flex;
  align-items: center;
  justify-content: flex-end;
  gap: 5px;
  height: 29px;
  padding-right: 10px;
  border-top: 1px solid #444;
  background: linear-gradient(#bdbdbd, #939393);
}

.statusbar i {
  width: 1px;
  height: 18px;
  margin: 0 2px;
  background: #555;
}

.taskbar {
  display: flex;
  gap: 1px;
  height: 40px;
  padding-left: 1px;
  background: #1d1d1d;
}

.task {
  display: flex;
  align-items: center;
  justify-content: center;
  width: 48px;
  background: linear-gradient(#76b9ed, #76b9ed) center bottom / 0 2px no-repeat;
}

.task.running {
  background-size: 40px 2px;
}

.task.current {
  background-color: #4a4a4a;
  background-size: 48px 2px;
}

.task svg {
  width: 24px;
  height: 24px;
}

.tray {
  display: flex;
  align-items: center;
  gap: 8px;
  margin-left: auto;
  padding-right: 24px;
  color: #fff;
  font: 12px/18px "Noto Sans", sans-serif;
}

.tray svg {
  width: 16px;
  height: 16px;
  fill: none;
  stroke: #fff;
}

.tray .action {
  width: 18px;
  height: 18px;
}

.lang {
  margin: 0 4px 0 2px;
}

.tray time {
  margin-right: 8px;
  font-size: 11px;
  text-align: center;
}
</style>
